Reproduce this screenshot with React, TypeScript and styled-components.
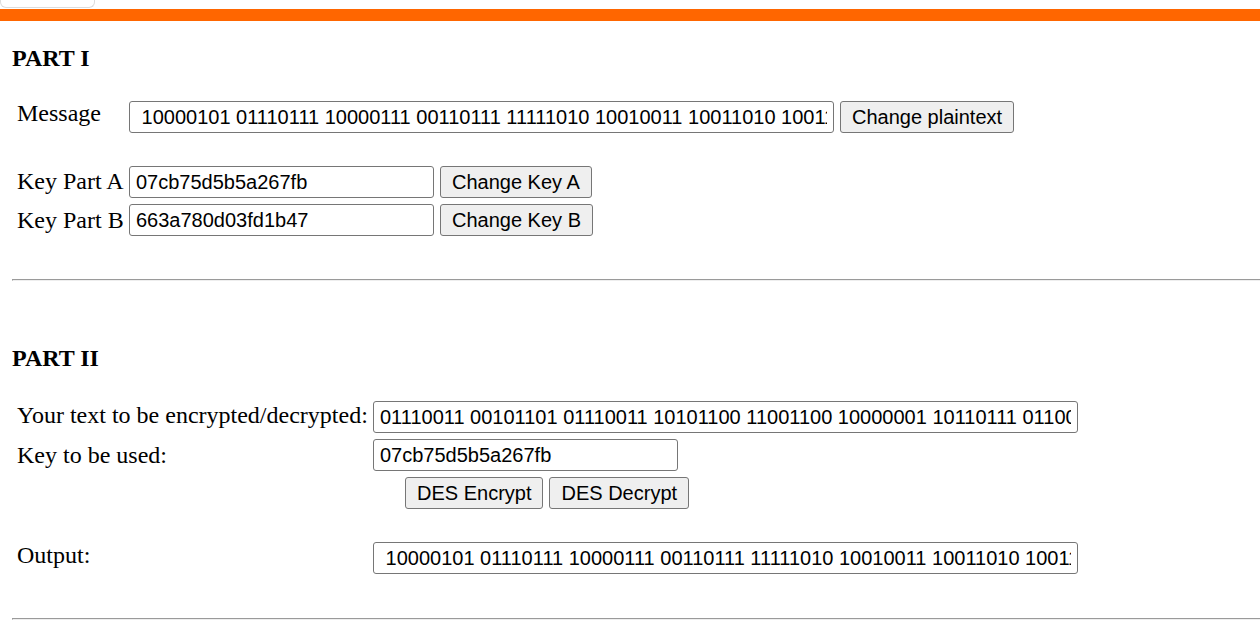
import React from "react";
import styled, { createGlobalStyle } from "styled-components";

const Global = createGlobalStyle`
  html, body { margin: 0; padding: 0; background: #ffffff; }
  body { font-family: "Liberation Serif", "Times New Roman", serif; color: #000; overflow: hidden; }
`;

const Page = styled.div`
  width: 1260px;
  min-height: 639px;
  background: #fff;
`;

const TopTab = styled.div`
  width: 95px;
  height: 8px;
  box-sizing: border-box;
  border: 1px solid #dcdcdc;
  border-top: none;
  border-radius: 0 0 6px 6px;
  background: #fff;
`;

const Bar = styled.div`
  margin-top: 1px;
  height: 12px;
  background: #ff6600;
`;

const Content = styled.div`
  padding-left: 12px;
`;

const Heading = styled.h2<{ $top: number }>`
  margin: ${(p) => p.$top}px 0 29px 0;
  font-family: "Liberation Serif", "Times New Roman", serif;
  font-weight: bold;
  font-size: 24px;
  line-height: 28px;
`;

const Form = styled.div`
  margin-left: 5px;
  display: flex;
  flex-direction: column;
`;

const Row = styled.div<{ $label: number; $gap: number }>`
  display: grid;
  grid-template-columns: ${(p) => p.$label}px auto;
  align-items: start;
  margin-top: ${(p) => p.$gap}px;
`;

const Label = styled.span<{ $shift: number }>`
  font-size: 24px;
  line-height: 28px;
  margin-top: ${(p) => p.$shift}px;
  white-space: nowrap;
`;

const Controls = styled.div<{ $indent?: number }>`
  display: flex;
  align-items: center;
  gap: 6px;
  margin-left: ${(p) => p.$indent ?? 0}px;
`;

const Field = styled.input<{ $wide?: boolean }>`
  box-sizing: border-box;
  width: ${(p) => (p.$wide ? 705 : 305)}px;
  height: 32px;
  padding: 0 6px;
  border: 1px solid #767676;
  border-radius: 3px;
  font-family: "Liberation Sans", Arial, sans-serif;
  font-size: 20px;
  color: #000;
  background: #fff;
  outline: none;
`;

const Button = styled.button`
  box-sizing: border-box;
  height: 32px;
  padding: 0 11px;
  border: 1px solid #767676;
  border-radius: 3px;
  background: #efefef;
  font-family: "Liberation Sans", Arial, sans-serif;
  font-size: 20px;
  color: #000;
  white-space: nowrap;
  cursor: pointer;
`;

const Rule = styled.hr<{ $top: number }>`
  margin: ${(p) => p.$top}px 0 0 0;
  height: 0;
  border: none;
  border-top: 1px solid #9a9a9a;
  border-left: 1px solid #9a9a9a;
  border-bottom: 1px solid #eeeeee;
`;

const MSG =
  " 10000101 01110111 10000111 00110111 11111010 10010011 10011010 10011001 01010110 11010011";
const TXT =
  "01110011 00101101 01110011 10101100 11001100 10000001 10110111 01100101 11100010";

export default function App() {
  return (
    <Page>
      <Global />
      <TopTab />
      <Bar />
      <Content>
        <Heading $top={23}>PART I</Heading>
        <Form>
          <Row $label={112} $gap={0}>
            <Label $shift={-2}>Message</Label>
            <Controls>
              <Field $wide readOnly value={MSG} />
              <Button>Change plaintext</Button>
            </Controls>
          </Row>
          <Row $label={112} $gap={33}>
            <Label $shift={1}>Key Part A</Label>
            <Controls>
              <Field readOnly value="07cb75d5b5a267fb" />
              <Button>Change Key A</Button>
            </Controls>
          </Row>
          <Row $label={112} $gap={6}>
            <Label $shift={2}>Key Part B</Label>
            <Controls>
              <Field readOnly value="663a780d03fd1b47" />
              <Button>Change Key B</Button>
            </Controls>
          </Row>
        </Form>
        <Rule $top={43} />
        <Heading $top={63}>PART II</Heading>
        <Form>
          <Row $label={356} $gap={0}>
            <Label $shift={0}>Your text to be encrypted/decrypted:</Label>
            <Controls>
              <Field $wide readOnly value={TXT} />
            </Controls>
          </Row>
          <Row $label={356} $gap={6}>
            <Label $shift={2}>Key to be used:</Label>
            <Controls>
              <Field readOnly value="07cb75d5b5a267fb" />
            </Controls>
          </Row>
          <Row $label={356} $gap={6}>
            <span />
            <Controls $indent={32}>
              <Button>DES Encrypt</Button>
              <Button>DES Decrypt</Button>
            </Controls>
          </Row>
          <Row $label={356} $gap={33}>
            <Label $shift={-1}>Output:</Label>
            <Controls>
              <Field $wide readOnly value={MSG} />
            </Controls>
          </Row>
        </Form>
        <Rule $top={44} />
      </Content>
    </Page>
  );
}
